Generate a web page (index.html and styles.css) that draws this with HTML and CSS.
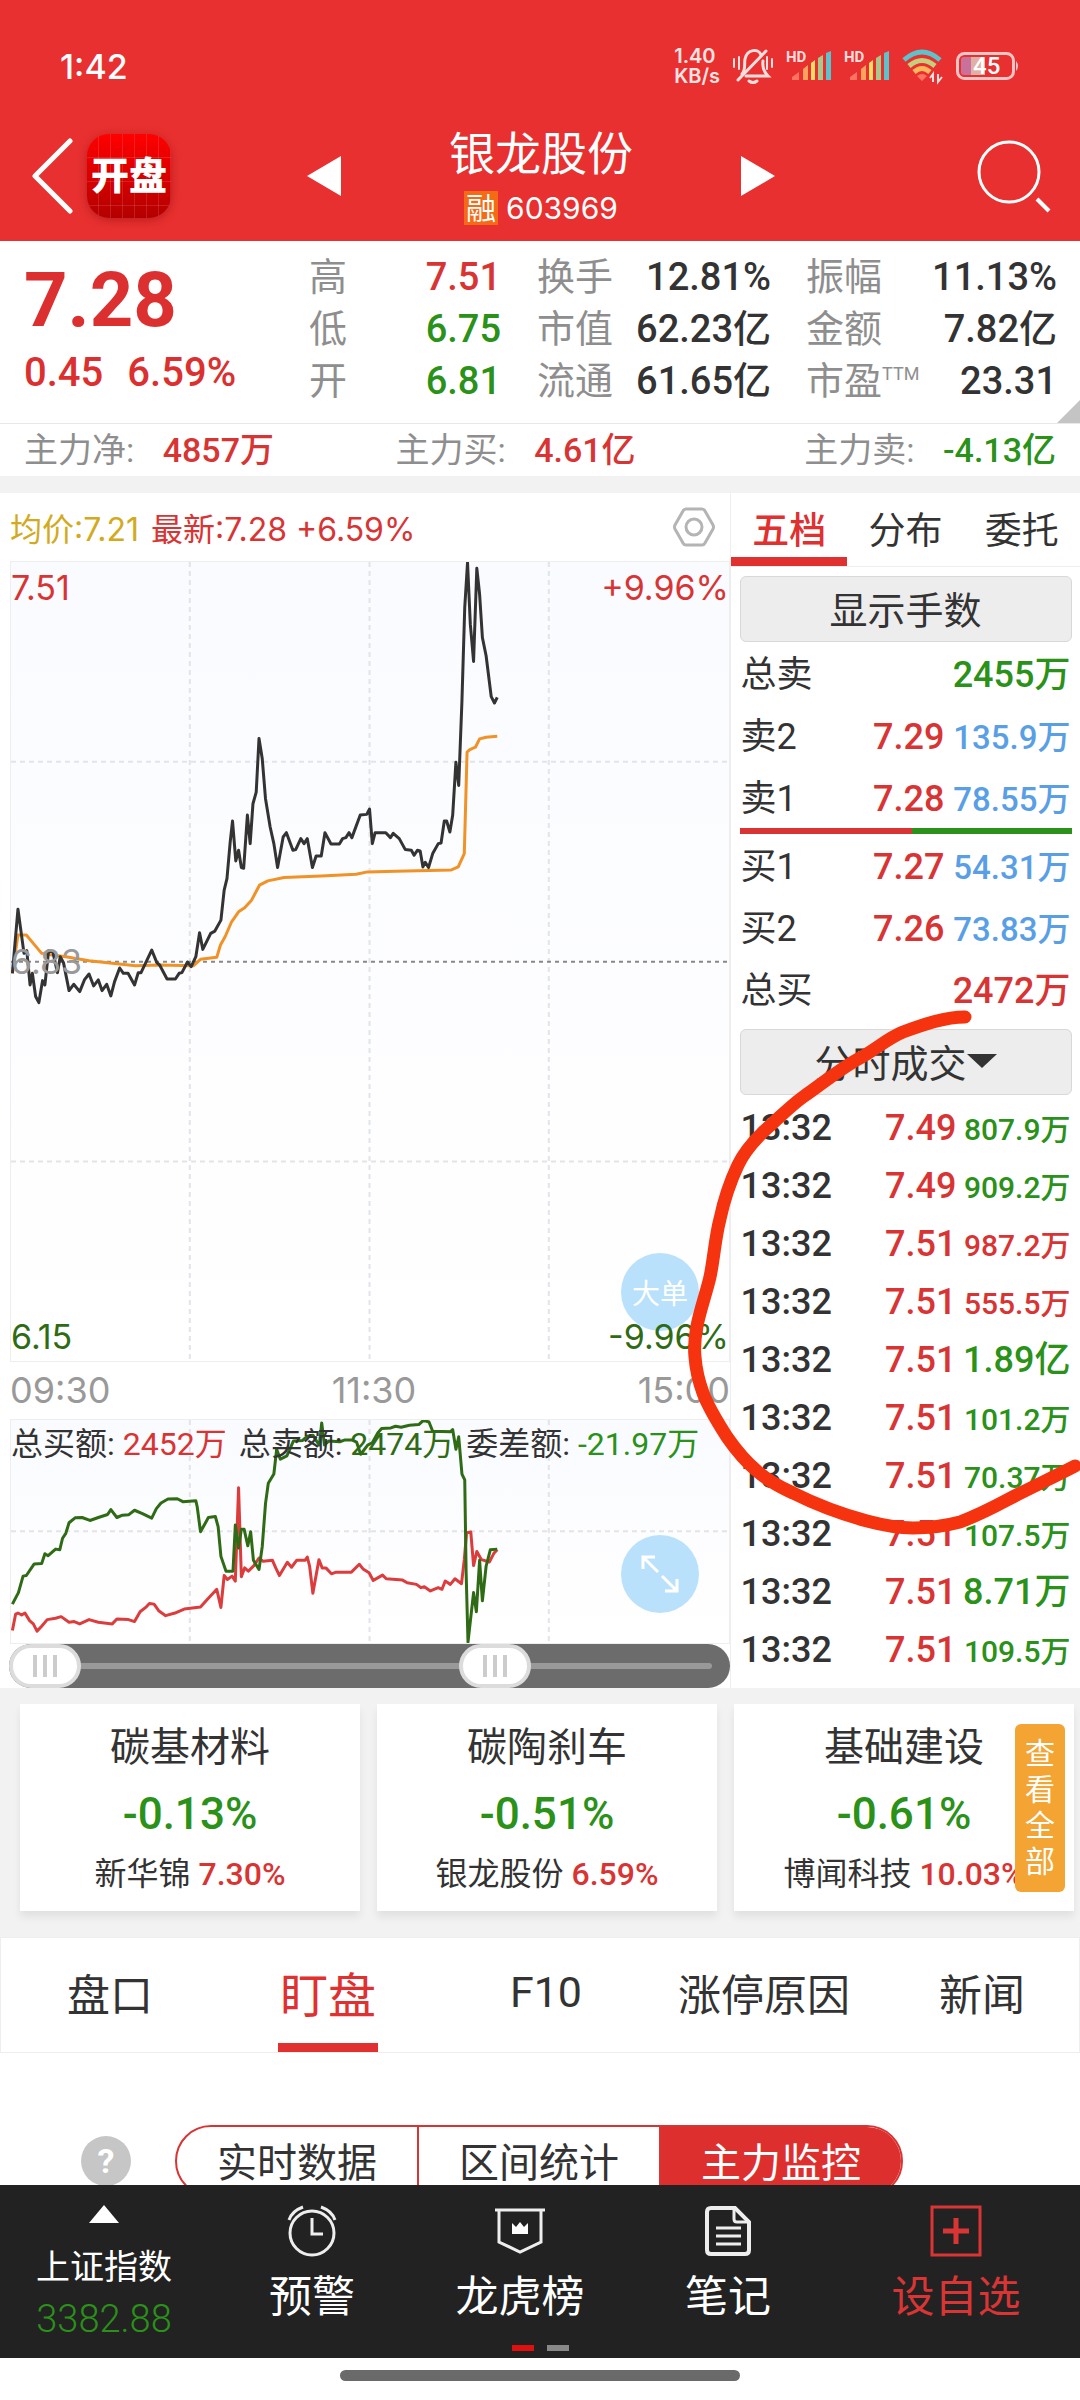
FILE: index.html
```html
<!doctype html>
<html lang="zh-CN">
  <head>
    <meta charset="UTF-8" />
    <meta name="viewport" content="width=device-width, initial-scale=1.0" />
    <title>银龙股份 603969</title>
    <link rel="stylesheet" href="styles.css">
  </head>
  <body>
    <header class="header">
      <div class="status-bar">
        <span class="clock">1:42</span>
        <div class="status-icons">
          <span class="net-speed">1.40<br>KB/s</span>
          <svg width="42" height="36" viewBox="0 0 42 36" fill="none" stroke="#ffdede" stroke-width="3" stroke-linecap="round">
            <path d="M10 26C14 22 12 16 13 11C15 1 27 0 29 7M31 13C30 20 32 24 36 28H14" />
            <path d="M34 3L6 32" />
            <path d="M17 33Q21 36 25 33" />
            <path d="M2 11V19M7 9V21M35 9V21M40 11V19" stroke-width="2" />
          </svg>
          <svg width="46" height="32" viewBox="0 0 46 32">
            <text x="0" y="12" class="hd">HD</text>
            <path fill="#ff7361" d="M6 30V27L13 22V30z" />
            <path fill="#ffa35c" d="M17 30V19L22 15V30z" />
            <path fill="#ffdc64" d="M25 30V13L29 10V30z" />
            <path fill="#a9c98c" d="M32 30V8L37 5V30z" />
            <path fill="#5cc3cc" d="M40 30V3L45 1V30z" />
          </svg>
          <svg width="46" height="32" viewBox="0 0 46 32">
            <text x="0" y="12" class="hd">HD</text>
            <path fill="#ff7361" d="M6 30V27L13 22V30z" />
            <path fill="#ffa35c" d="M17 30V19L22 15V30z" />
            <path fill="#ffdc64" d="M25 30V13L29 10V30z" />
            <path fill="#a9c98c" d="M32 30V8L37 5V30z" />
            <path fill="#5cc3cc" d="M40 30V3L45 1V30z" />
          </svg>
          <svg width="42" height="34" viewBox="0 0 42 34" fill="none" stroke-width="5">
            <path stroke="#5cc3cc" d="M2 11Q20-5 38 11" />
            <path stroke="#c3cf7c" d="M7 17Q20 6 33 17" />
            <path stroke="#ffb75c" d="M12 23Q20 16 28 23" />
            <path fill="#ff7361" d="M15 27Q20 23 25 27L20 32z" />
            <path stroke="#ffdede" stroke-width="2" d="M31 33V25L28 29M36 25V33L40 28" />
          </svg>
          <svg width="64" height="30" viewBox="0 0 64 30">
            <rect x="1.5" y="2.500" width="56" height="25" rx="7" fill="none" stroke="#ffc4c4" stroke-width="3" />
            <path fill="#c9719b" d="M5 9Q5 6 8 6H15V24H8Q5 24 5 21z" />
            <path fill="#dfb0a8" d="M15 6H29V24H15z" />
            <path fill="#ffc4c4" d="M60 10Q64 15 60 20z" />
            <text x="17" y="23" class="battery">45</text>
          </svg>
        </div>
      </div>

      <nav class="nav">
        <div class="nav-left">
          <button class="icon-btn" aria-label="返回">
            <svg width="44" height="76" viewBox="0 0 44 76" fill="none" stroke="#fff" stroke-width="5" stroke-linecap="round" stroke-linejoin="round"><path d="M40 3L5 38L40 73" /></svg>
          </button>
          <span class="app-logo">开盘</span>
        </div>
        <div class="stock">
          <button class="icon-btn" aria-label="上一只">
            <svg width="34" height="40" viewBox="0 0 34 40"><path fill="#fff" d="M34 0V40L0 20z" /></svg>
          </button>
          <div class="stock-title">
            <h1>银龙股份</h1>
            <p><span class="badge">融</span>603969</p>
          </div>
          <button class="icon-btn" aria-label="下一只">
            <svg width="34" height="40" viewBox="0 0 34 40"><path fill="#fff" d="M0 0V40L34 20z" /></svg>
          </button>
        </div>
        <button class="icon-btn search" aria-label="搜索">
          <svg width="76" height="76" viewBox="0 0 76 76" fill="none" stroke="#fff" stroke-width="3"><circle cx="33" cy="34" r="30" /><path d="M61 61L73 73" stroke-width="4" /></svg>
        </button>
      </nav>
    </header>

    <section class="quote">
      <div class="price">
        <strong>7.28</strong>
        <p><span>0.45</span><span>6.59%</span></p>
      </div>
      <dl class="stats">
        <div><dt>高</dt><dd class="red">7.51</dd></div>
        <div><dt>低</dt><dd class="green">6.75</dd></div>
        <div><dt>开</dt><dd class="green">6.81</dd></div>
      </dl>
      <dl class="stats stats-mid">
        <div><dt>换手</dt><dd>12.81%</dd></div>
        <div><dt>市值</dt><dd>62.23亿</dd></div>
        <div><dt>流通</dt><dd>61.65亿</dd></div>
      </dl>
      <dl class="stats stats-right">
        <div><dt>振幅</dt><dd>11.13%</dd></div>
        <div><dt>金额</dt><dd>7.82亿</dd></div>
        <div><dt>市盈<sup>TTM</sup></dt><dd>23.31</dd></div>
      </dl>
    </section>

    <section class="main-force">
      <p>主力净: <b class="red">4857万</b></p>
      <p>主力买: <b class="red">4.61亿</b></p>
      <p>主力卖: <b class="green">-4.13亿</b></p>
    </section>

    <main class="market">
      <div class="charts">
        <div class="chart-head">
          <span class="avg">均价:7.21</span>
          <span class="red">最新:7.28 +6.59%</span>
          <button class="icon-btn settings" aria-label="设置">
            <svg width="42" height="40" viewBox="0 0 42 40" fill="none" stroke="#b4b4b4" stroke-width="3"><path d="M13 2H29Q31 2 32 4L40 18Q41 20 40 22L32 36Q31 38 29 38H13Q11 38 10 36L2 22Q1 20 2 18L10 4Q11 2 13 2z" /><circle cx="21" cy="20" r="8" /></svg>
          </button>
        </div>

        <div class="chart price-chart">
          <svg viewBox="22 63 1546 2403" preserveAspectRatio="none">
            <g class="grid-lines">
              <path d="M407 63V2466M794 63V2466M1180 63V2466M22 664H1568M22 1866H1568" />
            </g>
            <path class="base-line" d="M22 1265H1568" />
            <polyline class="line-avg" points="25,1300 37,1185 55,1185 70,1210 88,1240 110,1245 140,1250 190,1262 230,1268 290,1277 340,1275 415,1277 430,1258 465,1252 473,1215 483,1190 497,1145 512,1115 525,1103 540,1080 557,1035 575,1022 610,1012 690,1007 765,1002 790,995 850,993 970,989 985,980 998,940 1004,635 1010,627 1022,620 1031,595 1045,590 1069,587" />
            <polyline class="line-price" points="25,1300 37,1107 50,1240 56,1232 63,1335 68,1300 75,1370 82,1388 90,1322 95,1335 103,1232 112,1235 122,1298 128,1250 135,1268 147,1352 157,1333 170,1355 180,1320 190,1302 200,1338 210,1320 218,1352 228,1333 237,1368 245,1325 256,1284 264,1300 274,1300 288,1335 296,1298 302,1298 325,1230 336,1268 342,1275 358,1317 376,1317 384,1300 390,1298 402,1266 410,1280 420,1250 428,1178 435,1228 452,1180 461,1173 474,1140 481,1050 487,1015 494,905 499,842 506,962 512,930 518,982 523,984 531,824 537,910 543,790 550,755 556,594 563,655 570,775 580,860 588,910 596,982 608,890 615,877 629,930 635,928 646,895 653,910 660,895 671,982 679,947 690,947 698,877 711,911 729,911 736,895 743,892 750,877 756,892 774,824 788,822 794,806 800,910 806,877 829,877 839,892 845,879 858,895 871,928 884,930 890,945 897,930 903,932 909,980 914,966 921,982 930,940 942,910 948,908 955,842 960,842 967,875 973,825 980,665 986,735 993,480 999,200 1005,65 1011,250 1018,362 1025,82 1031,160 1037,290 1045,345 1056,468 1063,487 1069,470" />
          </svg>
          <span class="label top-left red">7.51</span>
          <span class="label top-right red">+9.96%</span>
          <span class="label middle">6.83</span>
          <button class="round-btn">大单</button>
          <span class="label bottom-left">6.15</span>
          <span class="label bottom-right">-9.96%</span>
        </div>

        <div class="time-axis">
          <span>09:30</span>
          <span>11:30</span>
          <span>15:00</span>
        </div>

        <div class="chart order-chart">
          <svg viewBox="22 536 1546 677" preserveAspectRatio="none">
            <g class="grid-lines">
              <path d="M407 536V1213M794 536V1213M1180 536V1213M22 874H1568" />
            </g>
            <polyline class="line-buy" points="25,1175 32,1125 37,1122 45,1128 52,1122 62,1145 70,1155 78,1177 88,1162 100,1142 118,1138 130,1133 147,1150 158,1148 170,1155 190,1142 210,1150 240,1155 250,1140 275,1142 288,1148 300,1118 312,1105 320,1093 330,1095 340,1115 355,1130 375,1122 395,1110 430,1104 445,1080 465,1050 474,1105 481,1008 488,1020 498,1010 505,1025 512,742 518,1012 525,985 533,995 545,978 556,955 565,965 585,962 592,985 600,1008 617,968 626,983 637,962 655,962 660,952 665,980 672,1062 685,960 692,985 700,985 712,1003 722,998 755,998 772,974 780,988 793,1000 802,1023 822,1007 830,1018 865,1022 875,1030 895,1035 905,1045 912,1042 925,1055 942,1045 950,1050 957,1025 968,1035 978,1018 992,1033 998,960 1003,878 1012,876 1018,978 1025,935 1035,960 1052,967 1062,940 1069,930" />
            <polyline class="line-sell" points="25,1095 38,1060 48,1010 55,1008 72,973 88,972 95,942 102,948 118,928 127,930 133,895 140,880 147,848 160,833 175,832 192,841 210,832 230,823 237,808 250,832 262,825 275,824 288,810 305,820 325,834 335,805 345,788 360,776 380,775 392,784 420,781 423,800 430,875 440,850 447,832 462,829 468,860 474,950 485,995 500,995 505,855 512,925 518,868 524,868 532,918 538,875 544,962 556,990 563,920 570,790 576,728 588,700 594,625 602,655 616,645 630,600 650,598 660,585 672,582 680,600 686,612 691,545 697,612 706,600 730,602 740,597 757,597 766,603 775,640 790,612 800,605 812,575 820,562 840,560 850,555 862,558 880,552 900,550 910,537 922,542 930,570 968,572 973,565 980,625 986,587 993,700 999,718 1002,1000 1006,1210 1018,1060 1024,1118 1031,962 1037,1085 1045,980 1054,930 1069,928" />
          </svg>
          <p class="legend">
            <span>总买额: <i class="red">2452万</i></span>
            <span>总卖额: <i class="dark-green">2474万</i></span>
            <span>委差额: <i class="green">-21.97万</i></span>
          </p>
          <button class="round-btn" aria-label="放大">
            <svg width="40" height="40" viewBox="0 0 40 40" fill="none" stroke="#fff" stroke-width="3"><path d="M3 15V3H15M3 3L18 18M22 22L37 37M37 25V37H25" /></svg>
          </button>
        </div>

        <div class="range">
          <input type="range" min="0" max="1000" value="0" aria-label="开始时间">
          <input type="range" min="0" max="1000" value="693" aria-label="结束时间">
        </div>
      </div>

      <aside class="depth">
        <div class="depth-tabs">
          <button class="active">五档</button>
          <button>分布</button>
          <button>委托</button>
        </div>
        <button class="gray-btn">显示手数</button>
        <table class="book">
          <tr><td>总卖</td><td colspan="2" class="total green">2455万</td></tr>
          <tr><td>卖2</td><td class="red">7.29</td><td>135.9万</td></tr>
          <tr><td>卖1</td><td class="red">7.28</td><td>78.55万</td></tr>
        </table>
        <div class="ratio"><span style="width: 52%"></span></div>
        <table class="book">
          <tr><td>买1</td><td class="red">7.27</td><td>54.31万</td></tr>
          <tr><td>买2</td><td class="red">7.26</td><td>73.83万</td></tr>
          <tr><td>总买</td><td colspan="2" class="total red">2472万</td></tr>
        </table>
        <button class="gray-btn deals-btn">分时成交<svg width="30" height="14" viewBox="0 0 30 14"><path fill="#333" d="M0 0H30L15 14z" /></svg></button>
        <table class="deals">
          <tr><td>13:32</td><td>7.49</td><td class="green">807.9万</td></tr>
          <tr><td>13:32</td><td>7.49</td><td class="green">909.2万</td></tr>
          <tr><td>13:32</td><td>7.51</td><td class="red">987.2万</td></tr>
          <tr><td>13:32</td><td>7.51</td><td class="red">555.5万</td></tr>
          <tr><td>13:32</td><td>7.51</td><td class="green large">1.89亿</td></tr>
          <tr><td>13:32</td><td>7.51</td><td class="green">101.2万</td></tr>
          <tr><td>13:32</td><td>7.51</td><td class="green">70.37万</td></tr>
          <tr><td>13:32</td><td>7.51</td><td class="green">107.5万</td></tr>
          <tr><td>13:32</td><td>7.51</td><td class="green large">8.71万</td></tr>
          <tr><td>13:32</td><td>7.51</td><td class="green">109.5万</td></tr>
        </table>
      </aside>

      <!-- 手绘标注 -->
      <svg class="marker" viewBox="0 493 1080 1195" preserveAspectRatio="none">
        <path d="M965 1017C945 1017 925 1024 903 1032C888 1038 875 1050 860 1058C841 1068 822 1084 803 1097C789 1107 776 1121 763 1132C753 1142 744 1152 738 1165C730 1182 724 1200 720 1219C715 1238 714 1258 710 1277C706 1294 700 1310 697 1326C695 1336 694 1347 695 1357C696 1370 699 1382 703 1393C709 1409 718 1423 727 1437C736 1450 745 1461 757 1471C768 1481 780 1487 793 1493C817 1505 841 1514 867 1521C882 1525 898 1528 913 1528C929 1528 945 1526 960 1522C976 1516 992 1508 1007 1500C1030 1488 1052 1478 1075 1466" />
      </svg>
    </main>

    <section class="sectors">
      <div class="card">
        <h2>碳基材料</h2>
        <strong>-0.13%</strong>
        <p>新华锦 <b>7.30%</b></p>
      </div>
      <div class="card">
        <h2>碳陶刹车</h2>
        <strong>-0.51%</strong>
        <p>银龙股份 <b>6.59%</b></p>
      </div>
      <div class="card">
        <h2>基础建设</h2>
        <strong>-0.61%</strong>
        <p>博闻科技 <b>10.03%</b></p>
      </div>
      <button class="view-all">查看全部</button>
    </section>

    <div class="tabs">
      <button>盘口</button>
      <button class="active">盯盘</button>
      <button>F10</button>
      <button>涨停原因</button>
      <button>新闻</button>
    </div>

    <section class="panel">
      <button class="help" aria-label="帮助">?</button>
      <div class="segment">
        <button>实时数据</button>
        <button>区间统计</button>
        <button class="active">主力监控</button>
      </div>
    </section>

    <footer class="bottom-bar">
      <button class="index">
        <svg width="30" height="18" viewBox="0 0 30 18"><path fill="#fff" d="M15 0L30 18H0z" /></svg>
        <span>上证指数</span>
        <em>3382.88</em>
      </button>
      <button>
        <svg width="52" height="52" viewBox="0 0 52 52" fill="none" stroke="#eee" stroke-width="3"><circle cx="26" cy="28" r="22" /><path d="M26 13V29H37M3 15Q6 6 17 2M49 15Q46 6 35 2" /></svg>
        <span>预警</span>
      </button>
      <button>
        <svg width="52" height="52" viewBox="0 0 52 52" fill="none" stroke="#eee" stroke-width="3"><path d="M1 5H51M5 5V37L26 47L47 37V5" /><path fill="#fff" stroke="none" d="M18 18L22 22L26 17L30 22L34 18V29H18z" /></svg>
        <span>龙虎榜</span>
      </button>
      <button>
        <svg width="52" height="52" viewBox="0 0 52 52" fill="none" stroke="#eee" stroke-width="3"><path stroke-width="4" d="M33 3H9Q5 3 5 7V45Q5 49 9 49H43Q47 49 47 45V17z" /><path d="M32 3V14Q32 17 35 17H46M14 23H39M14 31H39M14 39H39" /></svg>
        <span>笔记</span>
      </button>
      <button class="add">
        <svg width="52" height="52" viewBox="0 0 52 52" fill="none" stroke="#d93535" stroke-width="3"><path d="M2 2H50V50H2z" /><path d="M26 13V39M13 26H39" stroke-width="5" /></svg>
        <span>设自选</span>
      </button>
      <div class="pager"><i class="on"></i><i></i></div>
    </footer>
    <div class="home-bar"></div>
  </body>
</html>
```

FILE: styles.css
```css
* {
  margin: 0;
  padding: 0;
  box-sizing: border-box;
}

body {
  font-family: Roboto, 'Noto Sans CJK SC', sans-serif;
  background: #fff;
  color: #333;
  overflow-x: hidden;
}

button {
  font: inherit;
  color: inherit;
  background: none;
  border: none;
  cursor: pointer;
}

svg {
  display: block;
}

i,
em {
  font-style: normal;
}

.red {
  color: #d93434;
}

.green {
  color: #2a9119;
}

.dark-green {
  color: #2f6b14;
}

/* header */
.header {
  height: 241px;
  background: #e83030;
  color: #fff;
}

.status-bar {
  display: flex;
  justify-content: space-between;
  align-items: center;
  padding: 44px 60px 0;
  height: 88px;
}

.clock {
  font-family: Inter, sans-serif;
  font-size: 34px;
  font-weight: 500;
}

.status-icons {
  display: flex;
  align-items: center;
  gap: 12px;
}

.status-icons svg {
  overflow: visible;
}

.net-speed {
  font-family: Inter, sans-serif;
  font-size: 20px;
  font-weight: 600;
  line-height: 20px;
  color: #ffe4e4;
}

.hd {
  font-size: 15px;
  font-weight: 700;
  fill: #ffdede;
}

.battery {
  font-size: 24px;
  font-weight: 500;
  fill: #fff;
}

.nav {
  display: grid;
  grid-template-columns: 1fr auto 1fr;
  align-items: center;
  padding: 36px 28px 0 30px;
}

.nav-left {
  display: flex;
  align-items: center;
  gap: 13px;
}

.app-logo {
  width: 84px;
  height: 84px;
  border-radius: 22px;
  background:
    repeating-linear-gradient(90deg, transparent 0 11px, rgba(255, 255, 255, 0.12) 11px 12px),
    repeating-linear-gradient(transparent 0 23px, rgba(255, 255, 255, 0.12) 23px 24px),
    linear-gradient(#f00, #b30000);
  box-shadow: 0 2px 10px rgba(120, 0, 0, 0.4);
  font-size: 38px;
  font-weight: 900;
  line-height: 84px;
  text-align: center;
}

.stock {
  display: flex;
  align-items: center;
  gap: 108px;
}

.stock-title {
  text-align: center;
}

.stock-title h1 {
  font-size: 46px;
  font-weight: 400;
  line-height: 60px;
}

.stock-title p {
  display: flex;
  justify-content: center;
  align-items: center;
  gap: 8px;
  margin-top: 4px;
  font-family: Inter, 'Noto Sans CJK SC', sans-serif;
  font-size: 30px;
  line-height: 40px;
}

.badge {
  width: 34px;
  height: 34px;
  background: #f56a14;
  font-size: 30px;
  line-height: 34px;
  text-align: center;
}

.search {
  justify-self: end;
}

/* quote */
.quote {
  position: relative;
  display: flex;
  padding: 10px 23px 16px 24px;
  border-bottom: 1px solid #e8e8e8;
}

.quote::after {
  content: '';
  position: absolute;
  right: 0;
  bottom: 0;
  border-left: 23px solid transparent;
  border-bottom: 23px solid #c4c4c4;
}

.price {
  flex: 1;
  color: #dc3030;
}

.price strong {
  display: block;
  font-size: 76px;
  line-height: 98px;
}

.price p {
  display: flex;
  gap: 24px;
  font-size: 40px;
  font-weight: 500;
  line-height: 48px;
}

.stats {
  width: 192px;
  font-size: 38px;
  line-height: 52px;
}

.stats div {
  display: flex;
  justify-content: space-between;
  height: 52px;
}

.stats dt {
  color: #8e8e8e;
}

.stats dd {
  font-weight: 500;
}

.stats sup {
  font-size: 18px;
  line-height: 18px;
  vertical-align: 14px;
}

.stats-mid {
  width: 234px;
  margin: 0 35px 0 36px;
}

.stats-right {
  width: 251px;
}

.main-force {
  display: grid;
  grid-template-columns: 36% 1fr auto;
  padding: 0 24px;
  font-size: 34px;
  line-height: 52px;
  color: #8e8e8e;
  border-bottom: 17px solid #f2f2f2;
}

.main-force b {
  margin-left: 20px;
  font-weight: 500;
}

/* charts */
.market {
  position: relative;
  display: flex;
}

.charts {
  flex: 1;
  display: flex;
  flex-direction: column;
}

.chart-head {
  display: flex;
  align-items: center;
  gap: 12px;
  height: 68px;
  padding: 0 15px 0 10px;
  font-family: Inter, 'Noto Sans CJK SC', sans-serif;
  font-size: 32px;
}

.avg {
  color: #d2aa1e;
}

.settings {
  margin-left: auto;
}

.chart {
  position: relative;
  margin-left: 10px;
  border: 1px solid #eee;
  background: linear-gradient(#fafbff, #fff);
}

.chart svg {
  width: 100%;
  height: 100%;
}

.chart path,
.chart polyline {
  fill: none;
  vector-effect: non-scaling-stroke;
}

.price-chart {
  height: 801px;
}

.order-chart {
  height: 225px;
}

.grid-lines {
  stroke: #e2e4e8;
  stroke-width: 2;
  stroke-dasharray: 5 4;
}

.base-line {
  stroke: #888;
  stroke-width: 2;
  stroke-dasharray: 4 4;
}

.line-price,
.line-avg,
.line-buy,
.line-sell {
  stroke-width: 3;
  stroke-linejoin: round;
}

.line-price {
  stroke: #333;
}

.line-avg {
  stroke: #f09226;
}

.line-buy {
  stroke: #dc3c3c;
}

.line-sell {
  stroke: #2f6b14;
}

.label {
  position: absolute;
  font-family: Inter, sans-serif;
  font-size: 34px;
  line-height: 48px;
}

.top-left {
  top: 2px;
  left: 0;
}

.top-right {
  top: 2px;
  right: 0;
}

.middle {
  top: 376px;
  left: 0;
  color: #999;
}

.bottom-left {
  bottom: 0;
  left: 0;
  color: #2f6b14;
}

.bottom-right {
  bottom: 0;
  right: 0;
  color: #2f6b14;
}

.round-btn {
  position: absolute;
  right: 30px;
  bottom: 30px;
  width: 78px;
  height: 78px;
  border-radius: 50%;
  background: #b9e1fc;
  color: #fff;
  font-size: 28px;
}

.round-btn svg {
  width: 40px;
  height: 40px;
  margin: auto;
}

.time-axis {
  display: flex;
  justify-content: space-between;
  padding-left: 10px;
  font-family: Inter, sans-serif;
  font-size: 36px;
  line-height: 57px;
  color: #999;
}

.legend {
  position: absolute;
  top: 0;
  left: 0;
  display: flex;
  gap: 12px;
  white-space: nowrap;
  font-size: 32px;
  line-height: 48px;
}

.range {
  position: relative;
  height: 44px;
  margin-left: 9px;
  border-radius: 22px;
  background: #6c6c6c;
}

.range::before {
  content: '';
  position: absolute;
  top: 19px;
  left: 20px;
  right: 18px;
  height: 6px;
  border-radius: 3px;
  background: #999;
}

.range input {
  position: absolute;
  top: 0;
  left: 0;
  width: 100%;
  height: 44px;
  appearance: none;
  background: none;
  pointer-events: none;
}

.range input::-webkit-slider-thumb {
  appearance: none;
  width: 72px;
  height: 44px;
  border: 4px solid #dcdcdc;
  border-radius: 22px;
  background:
    linear-gradient(90deg, #ccc 4px, transparent 4px, transparent 10px, #ccc 10px, #ccc 14px, transparent 14px, transparent 20px, #ccc 20px) center / 24px 22px no-repeat,
    #fff;
  pointer-events: auto;
}

/* depth */
.depth {
  width: 350px;
  border-left: 1px solid #eee;
}

.depth-tabs {
  display: flex;
  height: 74px;
  border-bottom: 1px solid #eee;
}

.depth-tabs button {
  flex: 1;
  padding-top: 6px;
  font-size: 37px;
  border-bottom: 9px solid transparent;
}

.depth-tabs .active {
  color: #e03030;
  font-weight: 500;
  border-color: #e03030;
}

.gray-btn {
  display: flex;
  justify-content: center;
  align-items: center;
  width: 332px;
  height: 66px;
  margin: 9px auto 0;
  padding-bottom: 3px;
  border: 1px solid #d8d8d8;
  border-radius: 6px;
  background: #ededed;
  font-size: 38px;
}

.deals-btn {
  margin: 9px auto 2px;
}

.depth table {
  width: 330px;
  margin: 0 auto;
  border-collapse: collapse;
  white-space: nowrap;
}

.depth td {
  padding-top: 6px;
  vertical-align: baseline;
  text-align: right;
  font-weight: 500;
  font-size: 36px;
}

.depth td:first-child {
  text-align: left;
}

.book tr {
  height: 62px;
}

.book td {
  line-height: 54px;
}

.book td:first-child {
  font-weight: 400;
}

.book td:nth-child(3) {
  width: 126px;
  font-size: 33px;
  color: #5a9fe6;
}

.ratio {
  width: 332px;
  height: 6px;
  margin: 0 auto;
  background: #2a9119;
}

.ratio span {
  display: block;
  height: 100%;
  background: #d93434;
}

.deals tr {
  height: 58px;
}

.deals td {
  line-height: 50px;
}

.deals td:nth-child(2) {
  color: #d93434;
}

.depth .deals td:nth-child(3) {
  width: 114px;
  font-size: 30px;
}

.depth .deals td.large {
  font-size: 36px;
}

.marker {
  position: absolute;
  top: 0;
  left: 0;
  width: 100%;
  height: 100%;
  pointer-events: none;
}

.marker path {
  fill: none;
  stroke: #f5330f;
  stroke-width: 13;
  stroke-linecap: round;
}

/* sectors */
.sectors {
  position: relative;
  display: flex;
  gap: 17px;
  padding: 16px 6px 26px 20px;
  background: #f2f2f2;
}

.card {
  flex: 1;
  height: 207px;
  padding-top: 16px;
  background: #fff;
  box-shadow: 0 6px 8px rgba(0, 0, 0, 0.07);
  text-align: center;
  white-space: nowrap;
}

.card h2 {
  font-size: 40px;
  font-weight: 400;
  line-height: 56px;
}

.card strong {
  display: block;
  font-size: 44px;
  font-weight: 500;
  line-height: 76px;
  color: #2a9119;
}

.card p {
  font-size: 32px;
  line-height: 44px;
}

.card b {
  font-weight: 500;
  color: #d93434;
}

.view-all {
  position: absolute;
  top: 36px;
  right: 15px;
  width: 50px;
  height: 168px;
  padding: 0 10px;
  border-radius: 6px;
  background: #f3a432;
  color: #fff;
  font-size: 30px;
  line-height: 36px;
}

/* tabs */
.tabs {
  display: flex;
  height: 116px;
  border: 1px solid #eee;
  overflow: hidden;
}

.tabs button {
  position: relative;
  flex: 0 0 218px;
  padding-bottom: 6px;
  font-size: 43px;
}

.tabs .active {
  color: #e03030;
  font-size: 48px;
}

.tabs .active::after {
  content: '';
  position: absolute;
  bottom: 0;
  left: 59px;
  right: 59px;
  height: 9px;
  background: #e03030;
}

.panel {
  display: flex;
  align-items: center;
  gap: 44px;
  height: 132px;
  padding: 84px 0 0 81px;
  overflow: hidden;
}

.help {
  width: 50px;
  height: 50px;
  border-radius: 50%;
  background: #c6c6c6;
  color: #fff;
  font-size: 34px;
  font-weight: 700;
}

.segment {
  flex: 0 0 728px;
  display: flex;
  height: 72px;
  border: 2px solid #d93434;
  border-radius: 36px;
  overflow: hidden;
}

.segment button {
  flex: 1;
  padding-bottom: 2px;
  font-size: 40px;
}

.segment button + button {
  border-left: 2px solid #d93434;
}

.segment .active {
  background: #de2f2f;
  color: #fff;
}

/* bottom bar */
.bottom-bar {
  position: relative;
  display: flex;
  height: 173px;
  background: #222;
  color: #fff;
}

.bottom-bar button {
  flex: 1;
  display: flex;
  flex-direction: column;
  align-items: center;
  padding-top: 20px;
  font-size: 43px;
  line-height: 60px;
}

.bottom-bar button span {
  margin-top: 10px;
}

.bottom-bar .index {
  font-size: 34px;
  line-height: 52px;
}

.bottom-bar .index span {
  margin-top: 18px;
}

.index em {
  font-size: 38px;
  font-weight: 300;
  color: #2a9119;
}

.bottom-bar .add {
  flex: 0 0 248px;
  color: #d93535;
}

.pager {
  position: absolute;
  bottom: 7px;
  left: 0;
  right: 0;
  display: flex;
  justify-content: center;
  gap: 13px;
}

.pager i {
  width: 22px;
  height: 6px;
  background: #888;
}

.pager .on {
  background: #e01010;
}

.home-bar {
  width: 37%;
  height: 11px;
  margin: 12px auto 18px;
  border-radius: 6px;
  background: #6a6a6a;
}
```
